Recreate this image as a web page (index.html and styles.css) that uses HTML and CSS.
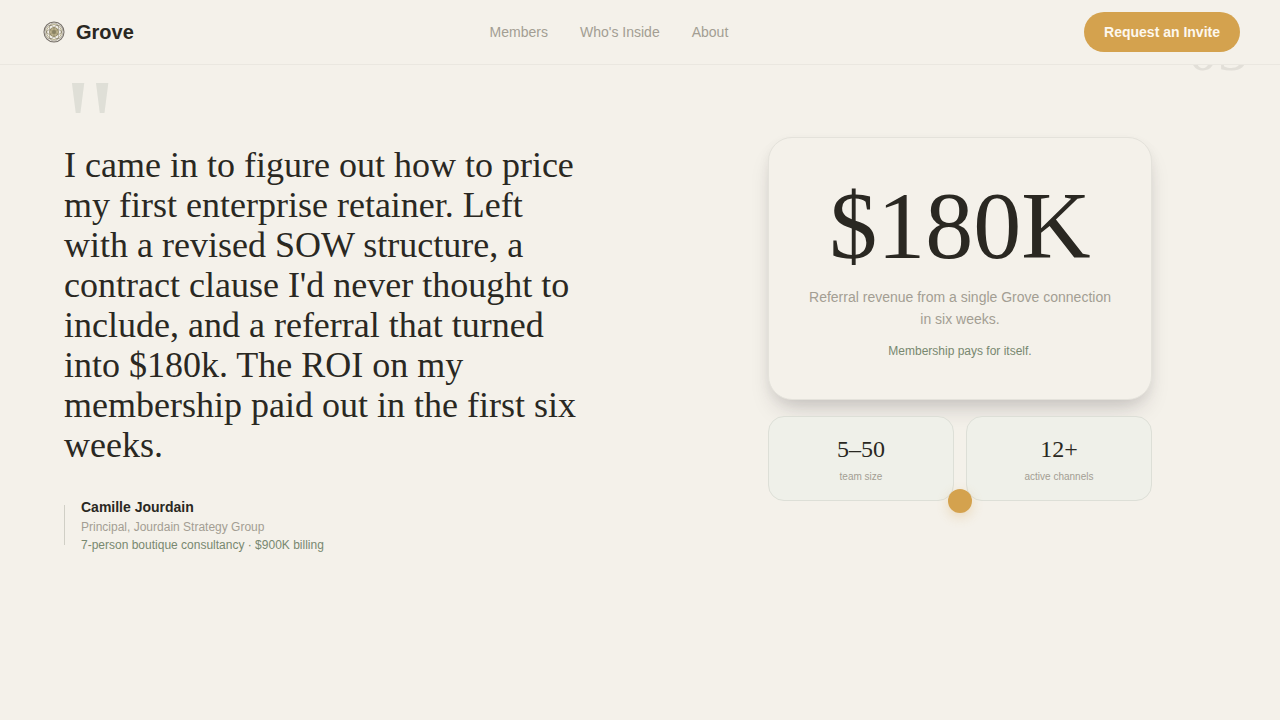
FILE: index.html
```html
<!DOCTYPE html>
<html lang="en">
<head>
<meta charset="utf-8">
<meta name="viewport" content="width=device-width, initial-scale=1">
<title>Grove</title>
<link rel="stylesheet" href="styles.css">
</head>
<body>
<header class="site-header">
  <a class="brand" href="#">
    <svg class="brand-mark" viewBox="0 0 28 28" fill="none" aria-hidden="true">
      <circle cx="14" cy="14" r="10" stroke="#77716a" stroke-width="1.1"/>
      <circle cx="14" cy="14" r="7.5" stroke="#a9a276" stroke-width=".8"/>
      <g stroke="#7c7566" stroke-width=".6">
        <circle cx="14" cy="9.5" r="4.5"/><circle cx="14" cy="18.5" r="4.5"/>
        <circle cx="10.1" cy="11.75" r="4.5"/><circle cx="17.9" cy="11.75" r="4.5"/>
        <circle cx="10.1" cy="16.25" r="4.5"/><circle cx="17.9" cy="16.25" r="4.5"/>
      </g>
      <circle cx="14" cy="14" r="4.5" fill="#a69a6b" fill-opacity=".7" stroke="#8b8462" stroke-width=".8"/>
      <circle cx="14" cy="14" r="2" fill="#898264"/>
    </svg>
    <span>Grove</span>
  </a>
  <nav class="site-nav" aria-label="Main">
    <a href="#">Members</a>
    <a href="#">Who's Inside</a>
    <a href="#">About</a>
  </nav>
  <button class="invite" type="button">Request an Invite</button>
</header>
<main class="story">
  <span class="story-number" aria-hidden="true">03</span>
  <section class="testimonial">
    <span class="quote-mark" aria-hidden="true">"</span>
    <blockquote class="quote">I came in to figure out how to price my first enterprise retainer. Left with a revised SOW structure, a contract clause I'd never thought to include, and a referral that turned into $180k. The ROI on my membership paid out in the first six weeks.</blockquote>
    <div class="author">
      <span class="author-rule"></span>
      <div>
        <p class="author-name">Camille Jourdain</p>
        <p class="author-role">Principal, Jourdain Strategy Group</p>
        <p class="author-firm">7-person boutique consultancy · $900K billing</p>
      </div>
    </div>
  </section>
  <section class="results">
    <div class="result-stack">
      <div class="result-card">
        <p class="result-value">$180K</p>
        <p class="result-text">Referral revenue from a single Grove connection in six weeks.</p>
        <p class="result-note">Membership pays for itself.</p>
      </div>
      <div class="stats">
        <div class="stat"><p class="stat-value">5–50</p><p class="stat-label">team size</p></div>
        <div class="stat"><p class="stat-value">12+</p><p class="stat-label">active channels</p></div>
      </div>
      <span class="dot"></span>
    </div>
  </section>
</main>
</body>
</html>
```
FILE: styles.css
```css
* { box-sizing: border-box; }
body {
  margin: 0;
  min-height: 100vh;
  background: #f4f1ea;
  color: #2a2822;
  font-family: "Liberation Sans", Arial, sans-serif;
}
p, blockquote { margin: 0; }
a { color: inherit; text-decoration: none; }
.site-header {
  position: sticky;
  top: 0;
  z-index: 2;
  display: flex;
  justify-content: space-between;
  align-items: center;
  height: 65px;
  padding: 0 40px;
  background: #f4f1ea;
  border-bottom: 1px solid #eae7e0;
}
.brand {
  display: flex;
  align-items: center;
  gap: 8px;
  font-size: 20px;
  font-weight: 700;
}
.brand-mark { width: 28px; height: 28px; }
.site-nav {
  display: flex;
  gap: 32px;
  font-size: 14px;
  color: #a39e93;
}
.invite {
  height: 40px;
  padding: 0 20px;
  border: 0;
  border-radius: 20px;
  background: #d4a24e;
  color: #fdf8ee;
  font: 700 14px "Liberation Sans", Arial, sans-serif;
}
.story {
  position: relative;
  display: grid;
  grid-template-columns: 1fr 1fr;
}
.story-number {
  position: absolute;
  top: -47px;
  right: 32px;
  color: #e2dfd8;
  font: 60px/64px "Liberation Serif", serif;
}
.testimonial {
  position: relative;
  padding: 80px 56px 80px 64px;
}
.quote-mark {
  position: absolute;
  top: -2px;
  left: 64px;
  color: #dfdfd7;
  font: 128px/120px "Liberation Serif", serif;
}
.quote { font: 36px/40px "Liberation Serif", serif; }
.author {
  display: flex;
  align-items: center;
  gap: 16px;
  margin-top: 32px;
}
.author-rule {
  width: 1px;
  height: 40px;
  background: #d0cfc6;
}
.author-name { font-size: 14px; line-height: 20px; font-weight: 700; }
.author-role { margin-top: 2px; font-size: 12px; line-height: 16px; color: #a39e93; }
.author-firm { margin-top: 2px; font-size: 12px; line-height: 16px; color: #788870; }
.results {
  display: flex;
  justify-content: center;
  align-items: flex-start;
  padding: 72px 32px;
}
.result-stack {
  position: relative;
  width: 100%;
  max-width: 384px;
}
.result-card {
  padding: 40px;
  border: 1px solid #e4e2db;
  border-radius: 24px;
  background: #f4f1ea;
  box-shadow: 0 14px 24px -8px rgba(42, 32, 44, .22), 0 4px 12px rgba(42, 32, 44, .05);
  text-align: center;
}
.result-value { font: 96px/96px "Liberation Serif", serif; }
.result-text { margin-top: 12px; font-size: 14px; line-height: 22px; color: #a39e93; }
.result-note { margin-top: 13px; font-size: 12px; line-height: 16px; color: #788870; }
.stats {
  position: relative;
  display: grid;
  grid-template-columns: 1fr 1fr;
  gap: 12px;
  margin-top: 16px;
}
.stat {
  padding: 16px;
  border: 1px solid #dddfd7;
  border-radius: 16px;
  background: #eff0e9;
  text-align: center;
}
.stat-value { font: 24px/32px "Liberation Serif", serif; }
.stat-label { margin-top: 4px; font-size: 10px; line-height: 15px; color: #a39e93; }
.dot {
  position: absolute;
  bottom: -12px;
  left: calc(50% - 12px);
  width: 24px;
  height: 24px;
  border-radius: 50%;
  background: #d4a24e;
  box-shadow: 0 4px 12px rgba(212, 162, 78, .3);
}
```
